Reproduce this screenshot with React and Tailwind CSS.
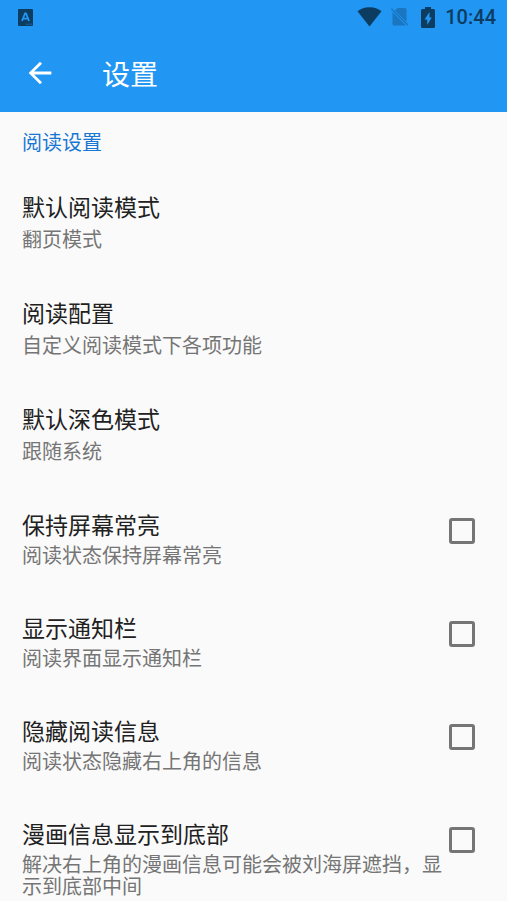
import React from "react";

const links = [
  { title: "默认阅读模式", summary: "翻页模式" },
  { title: "阅读配置", summary: "自定义阅读模式下各项功能" },
  { title: "默认深色模式", summary: "跟随系统" },
];

const toggles = [
  { id: "keep-screen-on", title: "保持屏幕常亮", summary: "阅读状态保持屏幕常亮" },
  { id: "show-notification-bar", title: "显示通知栏", summary: "阅读界面显示通知栏" },
  { id: "hide-reading-info", title: "隐藏阅读信息", summary: "阅读状态隐藏右上角的信息" },
  {
    id: "info-at-bottom",
    title: "漫画信息显示到底部",
    summary: "解决右上角的漫画信息可能会被刘海屏遮挡，显示到底部中间",
  },
];

function StatusBar() {
  return (
    <div className="flex h-[34px] items-center justify-between pl-[18px] pr-[11px] text-[#0d3c61]">
      <svg width="15" height="17" viewBox="0 0 15 17" aria-hidden="true">
        <rect width="15" height="17" rx="1" fill="currentColor" />
        <path d="M4 12L7 4.500h1L11 12M5.200 9.700h4.600" fill="none" stroke="#2196f3" strokeWidth="1.800" />
        <path d="M8 15.200h1.300M10.300 15.200h1.300M12.600 15.200h1.300" stroke="#2196f3" strokeWidth="1" opacity=".7" />
      </svg>
      <div className="flex items-center">
        <svg width="25" height="20" viewBox="0 0 25 20" className="mr-2" aria-hidden="true">
          <path d="M12.5 19.500L.5 4.200C3 2 7 .2 12.5.2S22 2 24.500 4.200z" fill="currentColor" />
        </svg>
        <svg width="19" height="20" viewBox="0 0 19 20" className="mr-3" aria-hidden="true">
          <path
            d="M7.500 1H15a1.500 1.500 0 0 1 1.500 1.500v12.600L5 3.600zM2.500 4.900L15.800 18.200a1.500 1.500 0 0 1-.8.300H4A1.500 1.500 0 0 1 2.500 17zM1.900 1.200L18.300 17.600l-1 1L.9 2.200z"
            fill="currentColor"
            opacity=".35"
          />
        </svg>
        <svg width="14" height="21" viewBox="0 0 14 21" className="mr-2.5" aria-hidden="true">
          <path
            d="M4 0h6v2h2.500A1.500 1.500 0 0 1 14 3.500v16a1.500 1.500 0 0 1-1.500 1.500h-11A1.500 1.500 0 0 1 0 19.500v-16A1.500 1.500 0 0 1 1.500 2H4zM8.500 5L3.500 12.500h2.700V18l4.600-7.500H8.500z"
            fill="currentColor"
            fillRule="evenodd"
          />
        </svg>
        <span className="font-[Roboto,sans-serif] text-[20px] font-medium leading-6">10:44</span>
      </div>
    </div>
  );
}

export default function App() {
  return (
    <div className="min-h-screen bg-[#fafafa] font-['Noto_Sans_CJK_SC',sans-serif]">
      <header className="bg-[#2196f3]">
        <StatusBar />
        <div className="flex h-[78px] items-center pl-[23px]">
          <button type="button" aria-label="返回" className="mr-[45px] text-white">
            <svg width="34" height="34" viewBox="0 0 24 24" aria-hidden="true">
              <path d="M20 11H7.830l5.590-5.590L12 4l-8 8 8 8 1.410-1.410L7.830 13H20v-2z" fill="currentColor" />
            </svg>
          </button>
          <h1 className="text-[28px] leading-9 text-white">设置</h1>
        </div>
      </header>

      <main>
        <h2 className="px-[22px] pt-[19px] pb-[15px] text-[20px] leading-[22px] text-[#1976d2]">阅读设置</h2>

        {links.map((item) => (
          <button key={item.title} type="button" className="block w-full px-[22px] py-6 text-left">
            <span className="block text-[23px] leading-7 text-[#212121]">{item.title}</span>
            <span className="mt-2 block text-[20px] leading-[22px] text-[#757575]">{item.summary}</span>
          </button>
        ))}

        {toggles.map((item) => (
          <div key={item.id} className="flex items-start pt-6 pb-[23px] pl-[22px] pr-8">
            <label htmlFor={item.id} className="min-w-0 flex-1">
              <span className="block text-[23px] leading-7 text-[#212121]">{item.title}</span>
              <span className="mt-1.5 block text-[20px] leading-[22px] text-[#757575]">{item.summary}</span>
            </label>
            <input
              id={item.id}
              type="checkbox"
              className="mt-2 size-[26px] shrink-0 appearance-none rounded-[3px] border-3 border-[#757575] checked:bg-[#2196f3]"
            />
          </div>
        ))}
      </main>
    </div>
  );
}
